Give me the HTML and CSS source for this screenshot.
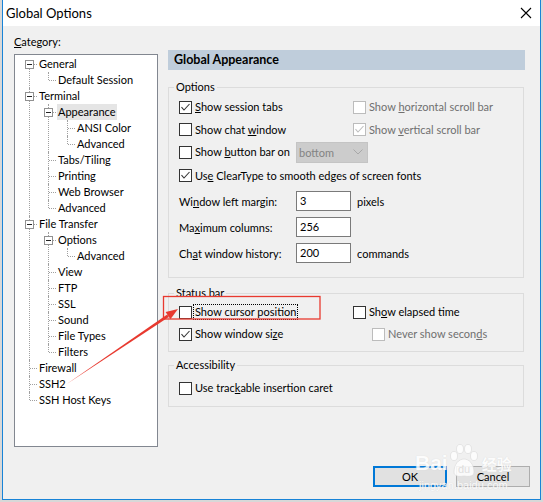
FILE: index.html
```html
<!DOCTYPE html>
<html>
<head>
<meta charset="utf-8">
<title>Global Options</title>
<link rel="stylesheet" href="styles.css">
</head>
<body>
<div class="screen">
  <div class="win">
    <div class="titlebar">
      <span class="title">Global Options</span>
      <svg class="close" width="12" height="12" viewBox="0 0 12 12"><path d="M1 1L11 11M11 1L1 11" stroke="#000" stroke-width="1.1" fill="none"/></svg>
    </div>
    <div class="body">
      <div class="main">
        <div class="leftcol">
          <div class="cat"><u>C</u>ategory:</div>
          <div class="tree">
            <ul>
              <li><div class="row"><span class="exp"></span>General</div>
                <ul><li><div class="row">Default Session</div></li></ul>
              </li>
              <li><div class="row"><span class="exp"></span>Terminal</div>
                <ul>
                  <li><div class="row"><span class="exp"></span><span class="selected">Appearance</span></div>
                    <ul>
                      <li><div class="row">ANSI Color</div></li>
                      <li><div class="row">Advanced</div></li>
                    </ul>
                  </li>
                  <li><div class="row">Tabs/Tiling</div></li>
                  <li><div class="row">Printing</div></li>
                  <li><div class="row">Web Browser</div></li>
                  <li><div class="row">Advanced</div></li>
                </ul>
              </li>
              <li><div class="row"><span class="exp"></span>File Transfer</div>
                <ul>
                  <li><div class="row"><span class="exp"></span>Options</div>
                    <ul><li><div class="row">Advanced</div></li></ul>
                  </li>
                  <li><div class="row">View</div></li>
                  <li><div class="row">FTP</div></li>
                  <li><div class="row">SSL</div></li>
                  <li><div class="row">Sound</div></li>
                  <li><div class="row">File Types</div></li>
                  <li><div class="row">Filters</div></li>
                </ul>
              </li>
              <li><div class="row">Firewall</div></li>
              <li><div class="row">SSH2</div></li>
              <li><div class="row">SSH Host Keys</div></li>
            </ul>
          </div>
        </div>
        <div class="rightcol">
          <div class="header">Global Appearance</div>

          <div class="group g-options">
            <span class="legend">Options</span>
            <div class="two h22">
              <div class="cbx"><span class="cb"><svg width="11" height="11" viewBox="0 0 11 11"><path d="M1.5 5.2L4 8L9.5 2" stroke="#333" stroke-width="1.1" fill="none"/></svg></span><span><u>S</u>how session tabs</span></div>
              <div class="cbx dis"><span class="cb"></span><span>Show <u>h</u>orizontal scroll bar</span></div>
            </div>
            <div class="two h23">
              <div class="cbx"><span class="cb"></span><span>Show chat <u>w</u>indow</span></div>
              <div class="cbx dis"><span class="cb"><svg width="11" height="11" viewBox="0 0 11 11"><path d="M1.5 5.2L4 8L9.5 2" stroke="#bdbdbd" stroke-width="1.1" fill="none"/></svg></span><span>Show <u>v</u>ertical scroll bar</span></div>
            </div>
            <div class="sel-row h22">
              <div class="cbx"><span class="cb"></span><span>Show <u>b</u>utton bar on</span></div>
              <div class="combo"><span>bottom</span><svg width="10" height="6" viewBox="0 0 10 6"><path d="M0.5 0.5L5 5L9.5 0.5" stroke="#a8a8a8" stroke-width="1" fill="none"/></svg></div>
            </div>
            <div class="r h25">
              <div class="cbx"><span class="cb"><svg width="11" height="11" viewBox="0 0 11 11"><path d="M1.5 5.2L4 8L9.5 2" stroke="#333" stroke-width="1.1" fill="none"/></svg></span><span>Us<u>e</u> ClearType to smooth edges of screen fonts</span></div>
            </div>
            <div class="field h26">
              <span>Wi<u>n</u>dow left margin:</span>
              <span class="input">3</span>
              <span class="unit">pixels</span>
            </div>
            <div class="field h26">
              <span>Ma<u>x</u>imum columns:</span>
              <span class="input">256</span>
              <span class="unit"></span>
            </div>
            <div class="field h26">
              <span>Ch<u>a</u>t window history:</span>
              <span class="input">200</span>
              <span class="unit">commands</span>
            </div>
          </div>

          <div class="group g-status">
            <span class="legend">Status bar</span>
            <div class="two h22">
              <div class="cbx"><span class="cb"></span><span class="focus">Show cursor position</span></div>
              <div class="cbx"><span class="cb"></span><span>Sh<u>o</u>w elapsed time</span></div>
            </div>
            <div class="two h22">
              <div class="cbx"><span class="cb"><svg width="11" height="11" viewBox="0 0 11 11"><path d="M1.5 5.2L4 8L9.5 2" stroke="#333" stroke-width="1.1" fill="none"/></svg></span><span>Show window si<u>z</u>e</span></div>
              <div class="cbx dis indent"><span class="cb"></span><span>Never show secon<u>d</u>s</span></div>
            </div>
          </div>

          <div class="group g-access">
            <span class="legend">Accessibility</span>
            <div class="r h22">
              <div class="cbx"><span class="cb"></span><span>Use trac<u>k</u>able insertion caret</span></div>
            </div>
          </div>
        </div>
      </div>
      <div class="buttons">
        <button class="btn ok">OK</button>
        <button class="btn">Cancel</button>
      </div>
    </div>
  </div>

  <div class="wm">
    <div class="wm-top">
      <span class="wm-bai">Bai</span>
      <svg class="wm-paw" width="36" height="34" viewBox="0 0 36 34">
        <g fill="#ffffff" stroke="#dadada" stroke-width="0.7">
          <ellipse cx="8" cy="12" rx="3.5" ry="4.5"/>
          <ellipse cx="14" cy="5" rx="3.5" ry="4.5"/>
          <ellipse cx="22" cy="5" rx="3.5" ry="4.5"/>
          <ellipse cx="28" cy="12" rx="3.5" ry="4.5"/>
          <path d="M8 28C8 20 13 15 18 15C23 15 28 20 28 28C28 32 24 33 18 32C12 33 8 32 8 28Z"/>
        </g>
        <text x="18" y="29" text-anchor="middle" font-family="Liberation Sans, sans-serif" font-size="11" fill="#dedede">du</text>
      </svg>
      <span class="wm-cn">经验</span>
    </div>
    <div class="wm-url">jingyan.baidu.com</div>
  </div>

  <svg class="annot" width="543" height="502" viewBox="0 0 543 502">
    <rect x="163.5" y="296.5" width="156.5" height="22.5" fill="none" stroke="#e8392f" stroke-width="1.3"/>
    <polygon points="66,384.6 168.8,316.9 167.2,314.5" fill="#e8392f"/>
    <polygon points="178,309 170.4,319.3 165.6,312.1" fill="#e8392f"/>
  </svg>
</div>
</body>
</html>
```

FILE: styles.css
```css
* {
  box-sizing: border-box;
}

html,
body {
  margin: 0;
  padding: 0;
}

body {
  font-family: Lato, "Noto Sans", "Noto Sans CJK SC", sans-serif;
  font-size: 11px;
  color: #000;
  background: #d8d8d8;
}

.screen {
  position: relative;
  width: 543px;
  height: 502px;
  overflow: hidden;
  background: #d8d8d8;
}

.win {
  margin-left: 2px;
  width: 539px;
  height: 500px;
  border: 1px solid #1883d7;
  border-top: none;
  background: #f0f0f0;
  display: flex;
  flex-direction: column;
}

.titlebar {
  height: 26px;
  flex: none;
  background: #fff;
  display: flex;
  align-items: center;
  justify-content: space-between;
  padding: 0 8px 0 3px;
}

.title {
  font-size: 13px;
  line-height: 26px;
}

.close {
  display: block;
}

.body {
  flex: 1;
  padding: 8px 10px 0 11px;
}

.main {
  display: flex;
}

.leftcol {
  width: 144px;
  flex: none;
}

.cat {
  line-height: 16px;
  margin-bottom: 4px;
}

/* tree */
.tree {
  width: 144px;
  height: 393px;
  border: 1px solid #828790;
  background: #fff;
  padding-top: 1px;
  overflow: hidden;
}

.tree ul {
  list-style: none;
  margin: 0;
  padding: 0;
}

.tree ul ul {
  padding-left: 19px;
}

.tree li {
  position: relative;
}

.tree li::before {
  content: "";
  position: absolute;
  left: 14px;
  top: 0;
  bottom: 0;
  border-left: 1px dotted #a0a0a0;
}

.tree > ul > li:first-child::before {
  top: 8px;
}

.tree li:last-child::before {
  bottom: auto;
  height: 8px;
}

.row {
  position: relative;
  height: 16px;
  line-height: 16px;
  padding-left: 24px;
  white-space: nowrap;
}

.row::before {
  content: "";
  position: absolute;
  left: 15px;
  top: 8px;
  width: 7px;
  border-top: 1px dotted #a0a0a0;
}

.exp {
  position: absolute;
  left: 10px;
  top: 4px;
  width: 9px;
  height: 9px;
  border: 1px solid #919191;
  background: #fff;
  z-index: 1;
}

.exp::after {
  content: "";
  position: absolute;
  left: 1px;
  top: 3px;
  width: 5px;
  height: 1px;
  background: #222;
}

.selected {
  background: #e5e5e5;
  padding: 0 1px;
  margin-left: -1px;
  display: inline-block;
  height: 16px;
}

/* right column */
.rightcol {
  width: 357px;
  flex: none;
  margin-left: 10px;
  padding-top: 16px;
}

.header {
  height: 20px;
  line-height: 20px;
  padding-left: 6px;
  background: #bfcddb;
  font-weight: 700;
  font-size: 12.5px;
}

.group {
  position: relative;
  width: 356px;
  border: 1px solid #dcdcdc;
}

.legend {
  position: absolute;
  top: -9px;
  left: 5px;
  padding: 0 2px;
  line-height: 16px;
  background: #f0f0f0;
}

.g-options {
  margin-top: 17px;
  padding: 8px 0 11px 10px;
}

.g-status {
  margin-top: 15px;
  padding: 7px 0 6px 10px;
}

.g-access {
  margin-top: 13px;
  padding: 11px 0 7px 10px;
}

.h22 { height: 22px; }
.h23 { height: 23px; }
.h25 { height: 25px; }
.h26 { height: 26px; }

.r {
  display: flex;
  align-items: center;
}

.two {
  display: grid;
  grid-template-columns: 174px auto;
  align-items: center;
}

.sel-row {
  display: grid;
  grid-template-columns: 117px auto;
  align-items: center;
}

.field {
  display: grid;
  grid-template-columns: 117px 55px auto;
  align-items: center;
}

.cbx {
  display: flex;
  align-items: center;
  white-space: nowrap;
  line-height: 16px;
}

.cb {
  width: 13px;
  height: 13px;
  flex: none;
  border: 1px solid #333;
  background: #fff;
  margin-right: 3px;
}

.cb svg {
  display: block;
}

.dis {
  color: #6f6f6f;
}

.dis .cb {
  border-color: #bcbcbc;
}

.indent {
  margin-left: 19px;
}

.focus {
  border: 1px dotted #000;
  padding: 0 1px;
  margin-left: -2px;
  line-height: 14px;
}

.combo {
  width: 72px;
  height: 21px;
  background: #cccccc;
  border: 1px solid #c4c4c4;
  color: #838383;
  display: flex;
  align-items: center;
  justify-content: space-between;
  padding: 0 4px 0 2px;
}

.input {
  width: 55px;
  height: 20px;
  border: 1px solid #7a7a7a;
  background: #fff;
  padding-left: 3px;
  line-height: 18px;
}

.unit {
  margin-left: 6px;
}

/* buttons */
.buttons {
  display: flex;
  justify-content: flex-end;
  gap: 9px;
  margin-top: 19px;
}

.btn {
  width: 74px;
  height: 21px;
  padding: 0;
  background: #e1e1e1;
  border: 1px solid #adadad;
  font: inherit;
  color: #000;
}

.btn.ok {
  border: 2px solid #0078d7;
}

/* watermark */
.wm {
  position: absolute;
  left: 415px;
  top: 443px;
  color: #ffffff;
  opacity: 0.85;
  pointer-events: none;
}

.wm-top {
  display: flex;
  align-items: center;
  height: 36px;
}

.wm-bai {
  font-family: "Liberation Sans", sans-serif;
  font-weight: 700;
  font-size: 21px;
  text-shadow: 0 0 1px #d0d0d0;
  margin-top: 4px;
}

.wm-paw {
  display: block;
  margin-left: -2px;
}

.wm-cn {
  font-family: "Noto Sans CJK SC", sans-serif;
  font-size: 15px;
  font-weight: 700;
  text-shadow: 0 0 1px #d0d0d0;
  margin-top: 4px;
}

.wm-url {
  font-family: "Liberation Sans", sans-serif;
  font-size: 11px;
  line-height: 13px;
  margin-top: 0;
  margin-left: 4px;
  text-shadow: 0 0 1px #c8c8c8;
}

/* annotation */
.annot {
  position: absolute;
  left: 0;
  top: 0;
  pointer-events: none;
}
```
